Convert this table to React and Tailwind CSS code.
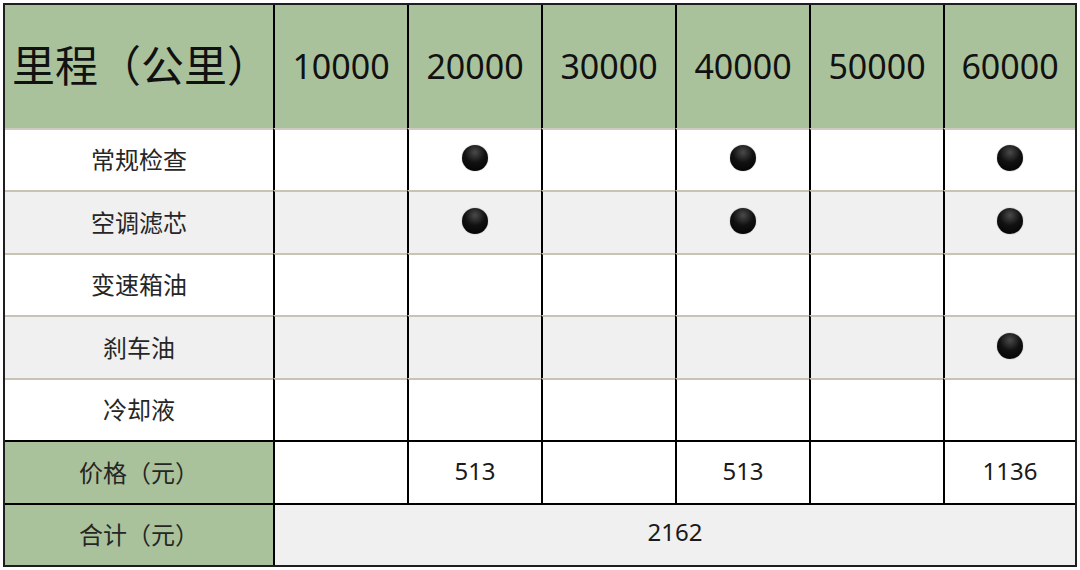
import React from 'react';

const cols = ['10000', '20000', '30000', '40000', '50000', '60000'];

const items = [
  { name: '常规检查', marks: [false, true, false, true, false, true] },
  { name: '空调滤芯', marks: [false, true, false, true, false, true] },
  { name: '变速箱油', marks: [false, false, false, false, false, false] },
  { name: '刹车油', marks: [false, false, false, false, false, true] },
  { name: '冷却液', marks: [false, false, false, false, false, false] },
];

const prices = ['', '513', '', '513', '', '1136'];

const Dot = () => (
  <span className="block w-[26px] h-[26px] rounded-full bg-[radial-gradient(circle_at_50%_28%,#4a4a4a_0%,#111_45%,#000_100%)] shadow-[0_0_1px_rgba(0,0,0,0.6)]" />
);

const App = () => {
  return (
    <div className="w-[1080px] h-[570px] bg-white pt-[3px] pl-[3px] font-['Noto_Sans','Noto_Sans_CJK_SC',sans-serif]">
      <div className="w-[1074px] border-2 border-[#1e1e1e] grid grid-cols-[268px_repeat(5,134px)_132px] grid-rows-[123px_62px_63px_62px_63px_62px_63px_62px]">
        {/* header */}
        <div className="bg-[#aac29b] flex items-center pl-[7px] text-[43px] text-[#111]">
          里程（公里）
        </div>
        {cols.map((c) => (
          <div key={c} className="bg-[#aac29b] border-l-2 border-black flex items-center justify-center text-[34px] text-[#111]">
            {c}
          </div>
        ))}

        {/* items */}
        {items.map((row, i) => {
          const bg = i % 2 === 1 ? 'bg-[#f0f0f0]' : 'bg-white';
          const top = i === 0 ? 'border-[#cfcac0]' : 'border-[#c9c3b6]';
          return (
            <React.Fragment key={row.name}>
              <div className={`${bg} border-t-2 ${top} flex items-center justify-center text-[24px] text-[#262626]`}>
                {row.name}
              </div>
              {row.marks.map((m, j) => (
                <div key={j} className={`${bg} border-t-2 ${top} border-l-2 border-l-black flex items-center justify-center pb-[4px]`}>
                  {m && <Dot />}
                </div>
              ))}
            </React.Fragment>
          );
        })}

        {/* price */}
        <div className="bg-[#aac29b] border-t-2 border-black flex items-center justify-center text-[24px] text-[#262626]">
          价格（元）
        </div>
        {prices.map((p, j) => (
          <div key={j} className="bg-white border-t-2 border-l-2 border-black flex items-center justify-center text-[24px] text-[#1a1a1a] pb-[4px]">
            {p}
          </div>
        ))}

        {/* total */}
        <div className="bg-[#aac29b] border-t-2 border-black flex items-center justify-center text-[24px] text-[#262626]">
          合计（元）
        </div>
        <div className="col-span-6 bg-[#f0f0f0] border-t-2 border-l-2 border-black flex items-center justify-center text-[24px] text-[#1a1a1a] pb-[6px]">
          2162
        </div>
      </div>
    </div>
  );
};

export default App;
